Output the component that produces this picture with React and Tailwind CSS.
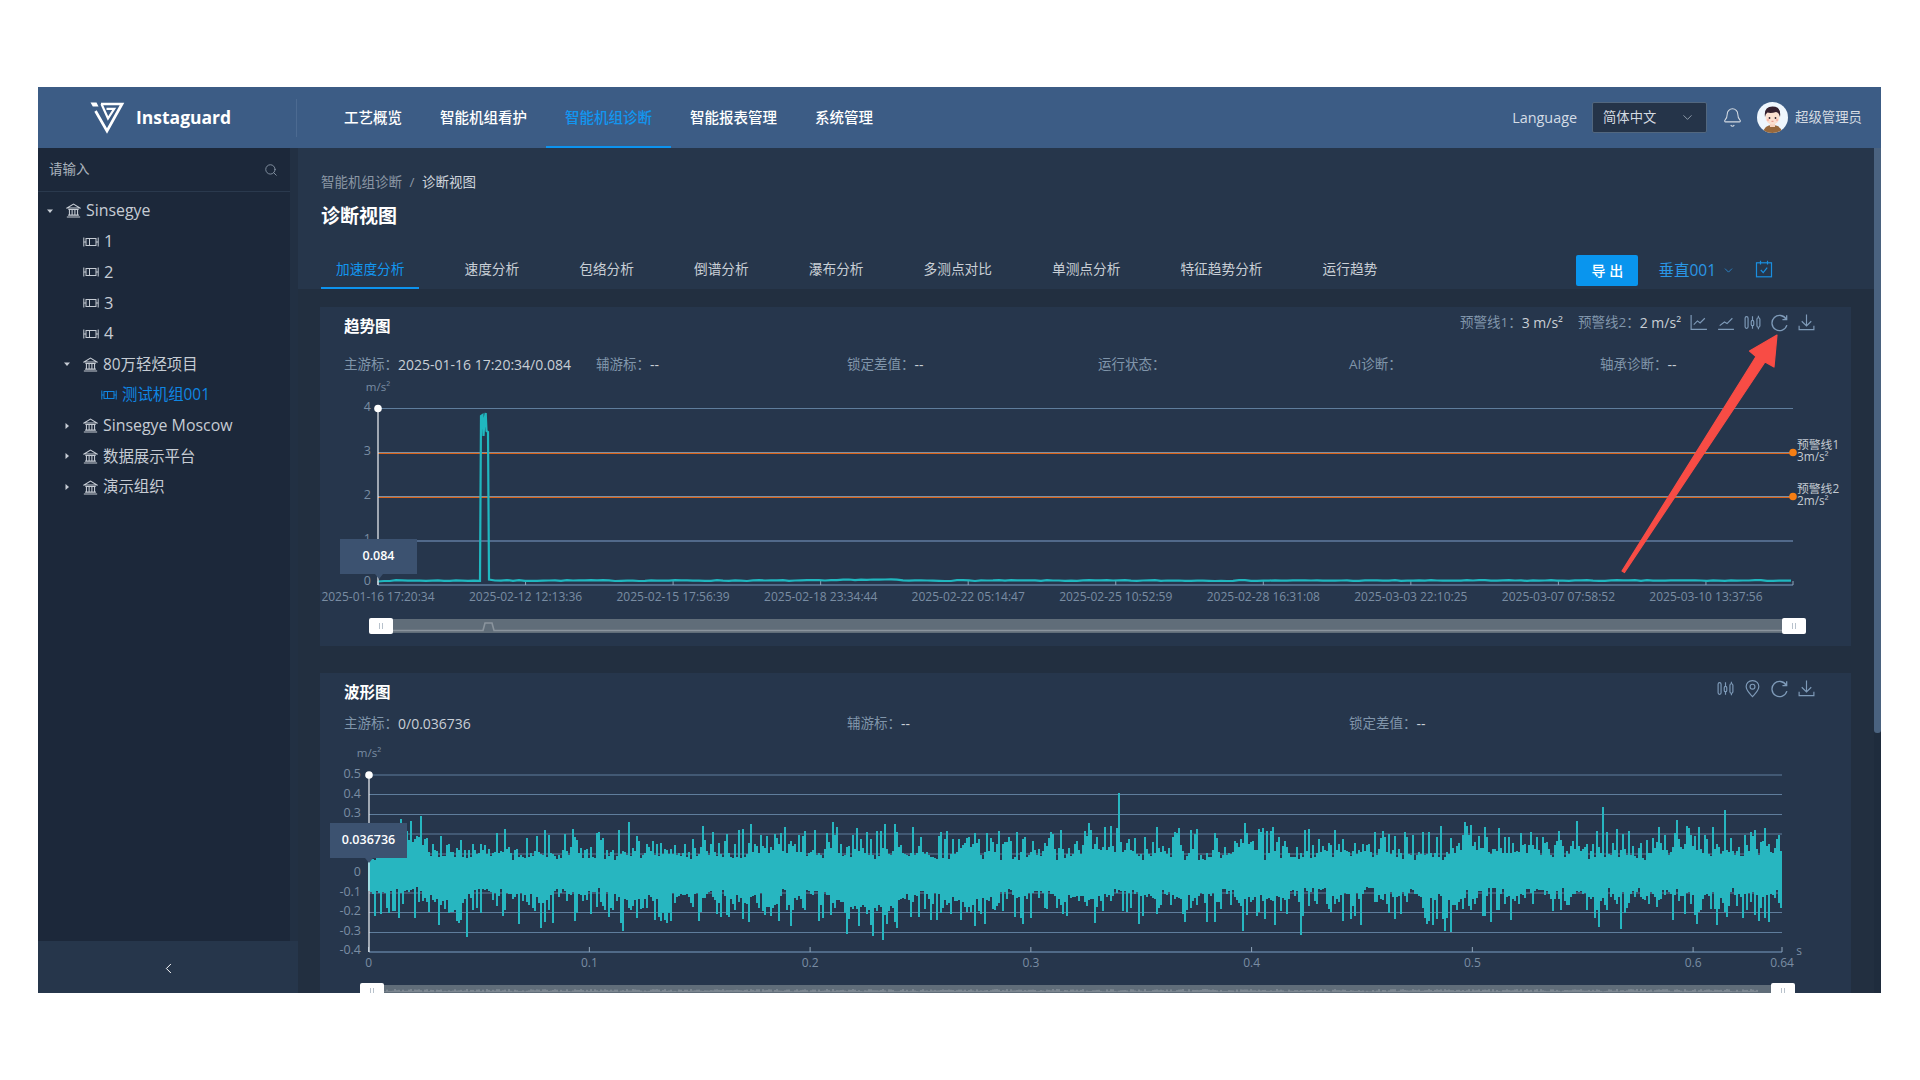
import { Bell, ChevronDown, ChevronLeft, Search } from 'lucide-react';

const navItems = ['工艺概览', '智能机组看护', '智能机组诊断', '智能报表管理', '系统管理'];
const tabs = ['加速度分析', '速度分析', '包络分析', '倒谱分析', '瀑布分析', '多测点对比', '单测点分析', '特征趋势分析', '运行趋势'];

const tree = [
  { label: 'Sinsegye', icon: 'bank', caret: 'down', pad: 'pl-[6px]', size: 'text-[15.9px]' },
  { label: '1', icon: 'unit', pad: 'pl-[45px]', size: 'text-[16.5px]' },
  { label: '2', icon: 'unit', pad: 'pl-[45px]', size: 'text-[16.5px]' },
  { label: '3', icon: 'unit', pad: 'pl-[45px]', size: 'text-[16.5px]' },
  { label: '4', icon: 'unit', pad: 'pl-[45px]', size: 'text-[16.5px]' },
  { label: '80万轻烃项目', icon: 'bank', caret: 'down', pad: 'pl-[23px]', size: 'text-[15.4px]' },
  { label: '测试机组001', icon: 'unit', pad: 'pl-[63px]', size: 'text-[15.4px]', active: true },
  { label: 'Sinsegye Moscow', icon: 'bank', caret: 'right', pad: 'pl-[23px]', size: 'text-[15.9px]' },
  { label: '数据展示平台', icon: 'bank', caret: 'right', pad: 'pl-[23px]', size: 'text-[15.4px]' },
  { label: '演示组织', icon: 'bank', caret: 'right', pad: 'pl-[23px]', size: 'text-[15.4px]' },
];

const trendDates = [
  '2025-01-16 17:20:34',
  '2025-02-12 12:13:36',
  '2025-02-15 17:56:39',
  '2025-02-18 23:34:44',
  '2025-02-22 05:14:47',
  '2025-02-25 10:52:59',
  '2025-02-28 16:31:08',
  '2025-03-03 22:10:25',
  '2025-03-07 07:58:52',
  '2025-03-10 13:37:56',
];

// small seeded random so the noise stays the same between runs
function makeRandom(seed) {
  let s = seed;
  return () => {
    s = (s + 0x6d2b79f5) | 0;
    let t = Math.imul(s ^ (s >>> 15), 1 | s);
    t = (t + Math.imul(t ^ (t >>> 7), 61 | t)) ^ t;
    return ((t ^ (t >>> 14)) >>> 0) / 4294967296;
  };
}

function buildTrend() {
  const rnd = makeRandom(7);
  let d = 'M378 581.5';
  for (let x = 384; x <= 480; x += 6) d += ` L${x} ${(581 - rnd() * 0.8).toFixed(1)}`;
  d += ' L481 416 L482.5 415 L483.5 436 L484.5 420 L485.7 413 L486.5 431 L488 432 L489 579.5';
  for (let x = 495; x <= 1793; x += 6) {
    const bump = x > 840 && x < 900 ? 0.8 : 0;
    d += ` L${x} ${(581 - rnd() * 0.9 - bump).toFixed(1)}`;
  }
  return d;
}

function buildWave() {
  const rnd = makeRandom(21);
  const peaksUp = { 421: 816, 1119: 793, 1603: 807, 1725: 810, 1441: 826, 629: 822 };
  const peaksDown = { 467: 937, 1301: 935, 1445: 931, 1361: 925, 1621: 929 };
  let d = '';
  let driftUp = 0;
  let driftDown = 0;
  for (let x = 369; x <= 1782; x += 2) {
    driftUp = driftUp * 0.95 + (rnd() - 0.5) * 4;
    driftDown = driftDown * 0.95 + (rnd() - 0.5) * 4;
    let up = 13 + Math.abs(driftUp) * 2 + Math.pow(rnd(), 2.6) * 30;
    let down = 14 + Math.abs(driftDown) * 2 + Math.pow(rnd(), 2.4) * 32;
    let top = 873 - up;
    let bottom = 873 + down;
    if (peaksUp[x]) top = peaksUp[x];
    if (peaksDown[x]) bottom = peaksDown[x];
    d += `M${x} ${top.toFixed(1)}V${bottom.toFixed(1)}`;
  }
  return d;
}

function buildNoise() {
  const rnd = makeRandom(5);
  let d = '';
  for (let x = 0; x < 1390; x += 2) d += `M${x} ${(4 + rnd() * 2.5).toFixed(1)}V7`;
  return d;
}

const trendPath = buildTrend();
const wavePath = buildWave();
const noisePath = buildNoise();

function Logo() {
  return (
    <svg width="35" height="32" viewBox="0 0 35 32" fill="none" stroke="#fff" strokeWidth="2.7">
      <path d="M0.5 0.5 H6.5 L8.5 4.6 H2.8 Z" fill="#fff" stroke="none" />
      <path d="M5.5 9 L17 29 L32 2 H11" />
      <path d="M11.5 2 L18 16.5 L24.2 6.8 H16.5" strokeWidth="2.2" />
    </svg>
  );
}

function Avatar() {
  return (
    <svg width="31" height="31" viewBox="0 0 31 31">
      <clipPath id="avatar-clip">
        <circle cx="15.5" cy="15.5" r="15.5" />
      </clipPath>
      <g clipPath="url(#avatar-clip)">
        <rect width="31" height="31" fill="#eef6fd" />
        <path d="M6 31 Q7 23 15.5 23 Q24 23 25 31 Z" fill="#97683c" />
        <rect x="13" y="20" width="5" height="5" fill="#f6d2bd" />
        <ellipse cx="15.5" cy="15" rx="7" ry="7.5" fill="#fbe0d0" />
        <path d="M8 15 Q6.5 4.5 15.5 4.5 Q24.5 4.5 23 15 Q22 10.5 19 10 Q14 11.5 10.5 10.5 Q8.5 11.5 8 15 Z" fill="#35212f" />
        <circle cx="12.5" cy="16" r="0.9" fill="#33212c" />
        <circle cx="18.5" cy="16" r="0.9" fill="#33212c" />
        <circle cx="11" cy="18" r="1.2" fill="#f7b9ad" />
        <circle cx="20" cy="18" r="1.2" fill="#f7b9ad" />
        <path d="M14.5 19.3 H16.5" stroke="#d9766c" strokeWidth="0.8" />
      </g>
    </svg>
  );
}

function BankIcon() {
  return (
    <svg width="15" height="15" viewBox="0 0 14 14" fill="none" stroke="currentColor" strokeWidth="1">
      <path d="M1 4.6 L7 1 L13 4.6 Z" />
      <path d="M2.2 6 H11.8 M3.2 6 V11 M5.7 6 V11 M8.3 6 V11 M10.8 6 V11 M2 11.3 H12 M0.8 13 H13.2" />
    </svg>
  );
}

function UnitIcon() {
  return (
    <svg width="16" height="12" viewBox="0 0 16 12" fill="none" stroke="currentColor" strokeWidth="1">
      <path d="M0.8 1.5 V10.5 M15.2 1.5 V10.5 M0.8 6 H3 M13 6 H15.2" />
      <rect x="3" y="2.5" width="10" height="7" />
      <path d="M6.5 2.5 V9.5" />
    </svg>
  );
}

function Caret({ dir }) {
  return (
    <svg width="12" height="12" viewBox="0 0 12 12" fill="#c6ccd4">
      {dir === 'down' ? <path d="M3 4.5 H9 L6 8 Z" /> : <path d="M4.5 3 L8 6 L4.5 9 Z" />}
    </svg>
  );
}

function ToolIcon({ name }) {
  return (
    <svg width="19" height="19" viewBox="0 0 18 18" fill="none" stroke="#7e9ab8" strokeWidth="1.1">
      {name === 'axes' && <path d="M2 2 V15.5 H17 M4.5 11 L8 7.5 L10.5 9.5 L15 5" />}
      {name === 'line' && <path d="M2 15.5 H17 M3.5 12 L8 8.5 L10.5 10 L15.5 5" />}
      {name === 'candle' && (
        <>
          <rect x="2" y="3.5" width="2.8" height="11" rx="1.4" />
          <rect x="7.8" y="7" width="2.4" height="5" rx="1.2" />
          <rect x="13.2" y="4.5" width="2.8" height="9" rx="1.4" />
          <path d="M9 3 V7 M9 12 V15 M14.6 2.5 V4.5 M14.6 13.5 V15.5" />
        </>
      )}
      {name === 'refresh' && <path d="M15.4 6 A7.2 7.2 0 1 0 16 11.5 M15.8 2.2 V6.3 H11.8" strokeWidth="1.25" />}
      {name === 'download' && <path d="M9 1.5 V12 M4.5 7.8 L9 12.3 L13.5 7.8 M2 12 V15.8 H16 V12" />}
      {name === 'pin' && (
        <>
          <path d="M9 1.5 C5.2 1.5 3 4.2 3 7.2 C3 11 7 14.5 9 16.8 C11 14.5 15 11 15 7.2 C15 4.2 12.8 1.5 9 1.5 Z" />
          <circle cx="9" cy="7.3" r="2.3" />
        </>
      )}
    </svg>
  );
}

function Info({ label, value, className }) {
  return (
    <div className={`flex items-center ${className || ''}`}>
      <span className="text-[13.5px] text-[#8095aa]">{label}：</span>
      {value && <span className="text-[14px] text-[#c9cfd6]">{value}</span>}
    </div>
  );
}

function SliderHandle({ className }) {
  return (
    <div className={`absolute flex w-[24px] items-center justify-center gap-[2px] rounded-[2px] bg-white ${className}`}>
      <span className="h-[6px] w-px bg-[#b8c2cc]" />
      <span className="h-[6px] w-px bg-[#b8c2cc]" />
    </div>
  );
}

function Tooltip({ value, className }) {
  return (
    <div className={`absolute flex h-[35px] w-[77px] items-center justify-center bg-[#3c5270] text-[12.5px] font-semibold text-white ${className}`}>
      {value}
      <span className="absolute -bottom-[5px] left-1/2 -ml-[4px] border-x-[4px] border-t-[5px] border-x-transparent border-t-[#3c5270]" />
    </div>
  );
}

function TrendChart() {
  return (
    <div className="relative mt-[2px] h-[232px]">
      <svg width="1531" height="232" viewBox="320 376 1531 232" fontSize="12" fill="#7a8da3">
        <text x="378" y="391" textAnchor="middle" fontSize="11.5">m/s²</text>
        {[['4', 408.5], ['3', 452.5], ['2', 496.5], ['1', 540.5], ['0', 583]].map(([t, y]) => (
          <text key={t} x="371" y={y + 2} textAnchor="end" fontSize="12.5">{t}</text>
        ))}
        <path d="M378 408.5 H1793" stroke="#5f7d9c" />
        <path d="M378 541 H1793" stroke="#51698a" strokeWidth="2" />
        <path d="M378 452.5 H1793 M378 496.5 H1793" stroke="#7f8f9f" />
        <path d="M378 453.5 H1793 M378 497.5 H1793" stroke="#d9631a" />
        <path d="M378 585 H1793" stroke="#5f7d9c" strokeWidth="1.6" />
        {trendDates.map((t, i) => (
          <g key={t}>
            <path d={`M${378 + i * 147.55} 581 V585`} stroke="#8ea3b8" />
            <text x={378 + i * 147.55} y="601" textAnchor="middle">{t}</text>
          </g>
        ))}
        <path d="M1793 581 V585" stroke="#8ea3b8" />
        <path d={trendPath} fill="none" stroke="#20b7bf" strokeWidth="2.2" />
        <path d="M378 408 V585" stroke="#f2f5f8" strokeWidth="1.2" />
        <circle cx="378" cy="408.5" r="3.8" fill="#fff" />
        <circle cx="1793" cy="452.5" r="3.8" fill="#f57e14" />
        <circle cx="1793" cy="496.5" r="3.8" fill="#f57e14" />
        <g fill="#c3cad2" fontSize="11.8">
          <text x="1797" y="449">预警线1</text>
          <text x="1797" y="461">3m/s²</text>
          <text x="1797" y="493">预警线2</text>
          <text x="1797" y="505">2m/s²</text>
        </g>
      </svg>
      <Tooltip value="0.084" className="left-[20px] top-[163px]" />
    </div>
  );
}

function WaveChart() {
  const grid = [775, 794.5, 814.5, 834, 854, 873.5, 893, 912.5, 932.5];
  // 0.2 and 0.1 sit under the tooltip, so they are left out
  const labels = [['0.5', 0], ['0.4', 1], ['0.3', 2], ['0', 5], ['-0.1', 6], ['-0.2', 7], ['-0.3', 8], ['-0.4', 9]];
  const xLabels = ['0', '0.1', '0.2', '0.3', '0.4', '0.5', '0.6'];
  return (
    <div className="relative mt-[2px] h-[240px]">
      <svg width="1531" height="240" viewBox="320 735 1531 240" fontSize="12" fill="#7a8da3">
        <text x="369" y="757" textAnchor="middle" fontSize="11.5">m/s²</text>
        {labels.map(([t, i]) => (
          <text key={t} x="361" y={778 + i * 19.6} textAnchor="end" fontSize="12.5">{t}</text>
        ))}
        {grid.map((y) => (
          <path key={y} d={`M369 ${y} H1782`} stroke="#5f7d9c" />
        ))}
        <path d="M369 952 H1782" stroke="#5f7d9c" strokeWidth="1.4" />
        {xLabels.map((t, i) => (
          <g key={t}>
            <path d={`M${368.6 + i * 220.75} 947 V952`} stroke="#8ea3b8" />
            <text x={368.6 + i * 220.75} y="967" textAnchor="middle">{t}</text>
          </g>
        ))}
        <path d="M1782 947 V952" stroke="#8ea3b8" />
        <text x="1782" y="967" textAnchor="middle">0.64</text>
        <text x="1799" y="955" textAnchor="middle">s</text>
        <path d={wavePath} fill="none" stroke="#27b6c0" strokeWidth="2" shapeRendering="crispEdges" />
        <path d="M369 775 V952" stroke="#f2f5f8" strokeWidth="1.2" />
        <circle cx="369" cy="775" r="3.8" fill="#fff" />
      </svg>
      <Tooltip value="0.036736" className="left-[10px] top-[88px]" />
    </div>
  );
}

function App() {
  return (
    <div className="h-screen w-screen overflow-hidden bg-white pl-[38px] pt-[87px] font-['Open_Sans','Noto_Sans_CJK_SC',sans-serif]">
      <div className="relative flex h-[906px] w-[1843px] flex-col overflow-hidden bg-[#222f40]">
        {/* Header */}
        <header className="flex h-[61px] shrink-0 items-center bg-[#3c5c85] pr-[19px] text-white">
          <div className="flex w-[258px] items-center pl-[52px]">
            <Logo />
            <span className="ml-[11px] text-[17.5px] font-bold">Instaguard</span>
          </div>
          <div className="h-[38px] w-px bg-[#4c6a91]" />
          <nav className="ml-[28px] flex h-full">
            {navItems.map((item) => (
              <div
                key={item}
                className={`flex items-center border-b-2 px-[19px] pt-[3px] text-[14.5px] font-medium ${
                  item === '智能机组诊断' ? 'border-[#0d93ef] text-[#1296f0]' : 'border-transparent text-white'
                }`}
              >
                {item}
              </div>
            ))}
          </nav>
          <div className="ml-auto flex items-center">
            <span className="text-[14.4px] text-[#d5dde6]">Language</span>
            <div className="ml-[15px] flex h-[31px] w-[115px] items-center justify-between rounded-[2px] border border-[#52677f] bg-[#253449] pl-[10px] pr-[11px] text-[13.3px] text-[#d5dbe2]">
              简体中文
              <ChevronDown size={15} strokeWidth={1.2} className="text-[#aeb9c5]" />
            </div>
            <Bell size={21} strokeWidth={1.2} className="ml-[15px] text-[#d3dae2]" />
            <div className="ml-[14px] flex items-center gap-[7px]">
              <Avatar />
              <span className="text-[13.4px] text-[#d5dbe2]">超级管理员</span>
            </div>
          </div>
        </header>

        <div className="flex min-h-0 flex-1">
          {/* Sidebar */}
          <aside className="flex w-[260px] shrink-0 flex-col">
            <div className="flex min-h-0 flex-1">
              <div className="w-[252px] bg-[#1c283a]">
                <div className="flex h-[44px] items-center justify-between border-b border-[#2a394d] pl-[11px] pr-[12px]">
                  <span className="text-[13.5px] text-[#aab3bd]">请输入</span>
                  <Search size={14} strokeWidth={1.5} className="text-[#8a98a8]" />
                </div>
                <ul className="pt-[3.5px]">
                  {tree.map((node) => (
                    <li
                      key={node.label}
                      className={`flex h-[30.7px] items-center ${node.size} ${node.pad} ${
                        node.active ? 'text-[#0f86e3]' : 'text-[#c6ccd4]'
                      }`}
                    >
                      {node.caret && (
                        <span className="mr-[10px] flex w-[12px]">
                          <Caret dir={node.caret} />
                        </span>
                      )}
                      <span className="mr-[5px] flex">{node.icon === 'bank' ? <BankIcon /> : <UnitIcon />}</span>
                      {node.label}
                    </li>
                  ))}
                </ul>
              </div>
              <div className="w-[8px] bg-[#223043]" />
            </div>
            <div className="flex h-[52px] shrink-0 items-center justify-center bg-[#26364b] pt-[3px]">
              <ChevronLeft size={17} strokeWidth={1.4} className="text-white" />
            </div>
          </aside>

          {/* Main */}
          <main className="min-w-0 flex-1 overflow-hidden">
            <div className="h-[141px] bg-[#26364b] pl-[23px]">
              <div className="flex h-[67px] flex-col pt-[25px]">
                <div className="flex items-center text-[13.5px] leading-[18px]">
                  <span className="text-[#8b97a5]">智能机组诊断</span>
                  <span className="mx-[7.5px] text-[#8b97a5]">/</span>
                  <span className="text-[#cfd5dc]">诊断视图</span>
                </div>
                <h1 className="mt-[12px] text-[19px] font-bold leading-[26px] text-white">诊断视图</h1>
              </div>
              <div className="flex h-[74px] items-end pr-[101px]">
                <div className="flex gap-[30px]">
                  {tabs.map((tab) => (
                    <div
                      key={tab}
                      className={`flex h-[38px] items-center border-b-2 px-[15px] text-[13.7px] ${
                        tab === '加速度分析' ? 'border-[#0d93ef] text-[#1296f0]' : 'border-transparent text-[#c9cfd6]'
                      }`}
                    >
                      {tab}
                    </div>
                  ))}
                </div>
                <div className="mb-[3px] ml-auto flex items-center">
                  <button className="flex h-[31px] w-[62px] items-center justify-center rounded-[2px] bg-[#0995ee] text-[14px] font-medium text-white">
                    导 出
                  </button>
                  <span className="ml-[20px] text-[15.5px] text-[#2a97e6]">垂直001</span>
                  <ChevronDown size={13} strokeWidth={1.4} className="ml-[6px] text-[#2a97e6]" />
                  <svg width="18" height="18" viewBox="0 0 18 18" fill="none" stroke="#1a8fe0" strokeWidth="1.2" className="-mt-[3px] ml-[20px]">
                    <rect x="1.5" y="2.8" width="15" height="14" />
                    <path d="M5.5 0.8 V4.5 M12.5 0.8 V4.5 M5.8 10 L8.2 12.6 L12.2 7.6" />
                  </svg>
                </div>
              </div>
            </div>

            <div className="flex flex-col gap-[27px] pl-[22px] pr-[23px] pt-[18px]">
              {/* Trend panel */}
              <section className="h-[339px] bg-[#26364c]">
                <div className="flex h-[40px] items-center justify-between pl-[24px] pr-[35px]">
                  <h2 className="text-[15.5px] font-bold text-white">趋势图</h2>
                  <div className="-mt-[10px] flex items-center">
                    <div className="flex items-center">
                      <span className="text-[13.5px] text-[#8095aa]">预警线1：</span>
                      <span className="text-[14px] text-[#c9cfd6]">3 m/s²</span>
                    </div>
                    <div className="ml-[15px] flex items-center">
                      <span className="text-[13.5px] text-[#8095aa]">预警线2：</span>
                      <span className="text-[14px] text-[#c9cfd6]">2 m/s²</span>
                    </div>
                    <div className="ml-[8px] flex items-center gap-[8px]">
                      <ToolIcon name="axes" />
                      <ToolIcon name="line" />
                      <ToolIcon name="candle" />
                      <ToolIcon name="refresh" />
                      <ToolIcon name="download" />
                    </div>
                  </div>
                </div>
                <div className="mt-[7px] grid h-[20px] grid-cols-[252px_251px_251px_251px_251px_251px] pl-[24px]">
                  <Info label="主游标" value="2025-01-16 17:20:34/0.084" />
                  <Info label="辅游标" value="--" />
                  <Info label="锁定差值" value="--" />
                  <Info label="运行状态" />
                  <Info label="AI诊断" />
                  <Info label="轴承诊断" value="--" />
                </div>
                <TrendChart />
                <div className="relative ml-[49px] mt-[10px] h-[16px] w-[1437px]">
                  <div className="absolute inset-x-[9px] inset-y-[1px] bg-[#606d79]">
                    <svg width="1419" height="14" fill="none" stroke="#8a949d" strokeWidth="1.6">
                      <path d="M0 11.5 H105 L107 4 H114 L116 11.5 H1419" />
                    </svg>
                  </div>
                  <SliderHandle className="left-0 top-0 h-[16px]" />
                  <SliderHandle className="right-0 top-0 h-[16px]" />
                </div>
              </section>

              {/* Wave panel */}
              <section className="h-[330px] bg-[#26364c]">
                <div className="flex h-[40px] items-center justify-between pl-[24px] pr-[35px]">
                  <h2 className="text-[15.5px] font-bold text-white">波形图</h2>
                  <div className="-mt-[10px] flex items-center gap-[8px]">
                    <ToolIcon name="candle" />
                    <ToolIcon name="pin" />
                    <ToolIcon name="refresh" />
                    <ToolIcon name="download" />
                  </div>
                </div>
                <div className="grid h-[20px] grid-cols-[503px_502px_251px] pl-[24px]">
                  <Info label="主游标" value="0/0.036736" />
                  <Info label="辅游标" value="--" />
                  <Info label="锁定差值" value="--" />
                </div>
                <WaveChart />
                <div className="relative ml-[40px] mt-[8px] h-[16px] w-[1435px]">
                  <div className="absolute inset-x-[9px] inset-y-[2px] bg-[#606d79]">
                    <svg width="1417" height="12" fill="none" stroke="#98a1a9" strokeWidth="1">
                      <path d={noisePath} />
                    </svg>
                  </div>
                  <SliderHandle className="left-0 top-0 h-[16px]" />
                  <SliderHandle className="right-0 top-0 h-[16px]" />
                </div>
              </section>
            </div>
          </main>

          {/* Scrollbar */}
          <div className="w-[7px] shrink-0 bg-[#1f2c3d]">
            <div className="h-[585px] rounded-b-[3px] bg-[#4a627f]" />
          </div>
        </div>

        {/* Red annotation arrow */}
        <svg
          className="pointer-events-none absolute left-0 top-0"
          width="1843"
          height="906"
          viewBox="38 87 1843 906"
          fill="#f84c45"
          stroke="#f84c45"
          strokeLinejoin="round"
        >
          <path d="M1622 571 L1624.5 572.5 L1765 362 L1774 367 L1777 335 L1749.5 351 L1756 356.5 Z" strokeWidth="1.2" />
        </svg>
      </div>
    </div>
  );
}

export default App;
